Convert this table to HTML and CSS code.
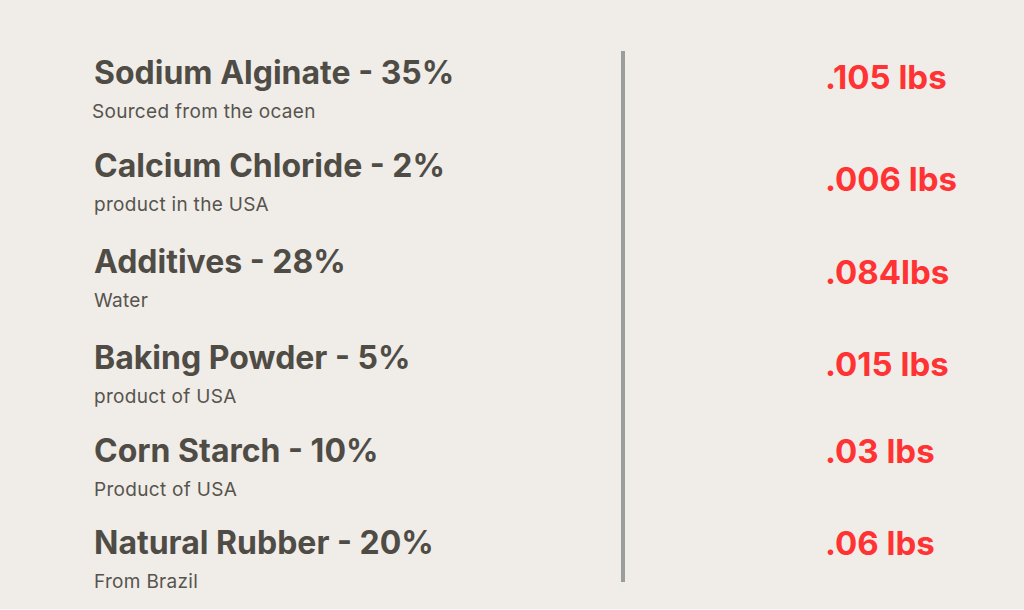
FILE: index.html
```html
<!DOCTYPE html>
<html lang="en">
<head>
<meta charset="utf-8">
<title>Ingredients</title>
<link rel="stylesheet" href="styles.css">
</head>
<body>
<main class="panel">
  <section class="ingredients">
    <div class="item item-first">
      <h2 class="name">Sodium Alginate - 35%</h2>
      <p class="origin origin-first">Sourced from the ocaen</p>
    </div>
    <div class="item">
      <h2 class="name">Calcium Chloride - 2%</h2>
      <p class="origin">product in the USA</p>
    </div>
    <div class="item item-spaced">
      <h2 class="name">Additives - 28%</h2>
      <p class="origin">Water</p>
    </div>
    <div class="item item-spaced">
      <h2 class="name">Baking Powder - 5%</h2>
      <p class="origin">product of USA</p>
    </div>
    <div class="item item-nudged">
      <h2 class="name">Corn Starch - 10%</h2>
      <p class="origin">Product of USA</p>
    </div>
    <div class="item">
      <h2 class="name">Natural Rubber - 20%</h2>
      <p class="origin">From Brazil</p>
    </div>
  </section>
  <div class="divider"></div>
  <section class="weights">
    <p class="weight w1">.105 lbs</p>
    <p class="weight w2">.006 lbs</p>
    <p class="weight w3">.084lbs</p>
    <p class="weight w4">.015 lbs</p>
    <p class="weight w5">.03 lbs</p>
    <p class="weight w6">.06 lbs</p>
  </section>
</main>
</body>
</html>
```
FILE: styles.css
```css
html {
  background: #fbfaf9;
}
body {
  margin: 0;
  font-family: Inter, "Noto Sans", sans-serif;
}
.panel {
  height: 609px;
  background: #f0ede9;
  display: flex;
  align-items: flex-start;
  box-sizing: border-box;
}
.ingredients {
  width: 527px;
  padding-left: 94px;
  padding-top: 53px;
  display: flex;
  flex-direction: column;
  gap: 21px;
}
.item {
  display: flex;
  flex-direction: column;
  gap: 7px;
}
.item-first {
  margin-bottom: 1px;
}
.item-spaced {
  margin-top: 4px;
}
.item-nudged {
  margin-top: 1px;
}
.name {
  margin: 0;
  font-size: 32px;
  line-height: 40px;
  font-weight: 700;
  color: #4f4c45;
}
.origin {
  margin: 0;
  font-size: 19px;
  line-height: 24px;
  font-weight: 400;
  letter-spacing: 0.3px;
  color: #57544e;
}
.origin-first {
  margin-left: -2px;
}
.divider {
  width: 4px;
  height: 531px;
  margin-top: 51px;
  background: #9b9c9c;
}
.weights {
  padding-left: 200px;
  padding-top: 57px;
  display: flex;
  flex-direction: column;
}
.weight {
  margin: 0;
  font-size: 33px;
  line-height: 40px;
  font-weight: 700;
  color: #ff3333;
}
.w2 { margin-top: 62px; }
.w3 { margin-top: 53px; }
.w4 { margin-top: 52px; }
.w5 { margin-top: 47px; }
.w6 { margin-top: 52px; }
```
